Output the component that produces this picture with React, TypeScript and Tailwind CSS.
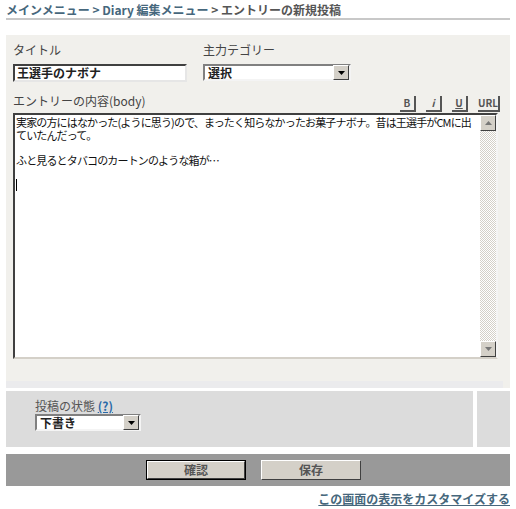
import React from 'react';

const font = { fontFamily: '"MS UI Gothic", "Noto Sans CJK JP", "DejaVu Sans", sans-serif' };

function DropButton() {
  return (
    <div className="w-[16px] h-[15px] bg-[#d4d0c8] border border-t-white border-l-white border-b-[#404040] border-r-[#404040] flex items-center justify-center">
      <svg width="7" height="4" viewBox="0 0 7 4">
        <path d="M0 0h7L3.5 4z" fill="#000" />
      </svg>
    </div>
  );
}

function Select({ label, width }: { label: string; width: string }) {
  return (
    <div className={`${width} h-[17px] bg-white border-2 border-t-[#808080] border-l-[#808080] border-b-[#f4f4f4] border-r-[#f4f4f4] flex items-center justify-between`}>
      <span className="pl-[3px] text-[12px] font-bold text-[#222] leading-none">{label}</span>
      <DropButton />
    </div>
  );
}

function FmtButton({ children, w }: { children: React.ReactNode; w: string }) {
  return (
    <div className={`${w} h-[16px] bg-[#f1f0ec] border-r-2 border-b-2 border-[#555] flex items-center justify-center text-[10px] font-bold text-[#555] leading-none`}>
      {children}
    </div>
  );
}

export default function App() {
  return (
    <div className="w-[516px] h-[509px] bg-white text-[12px] text-[#333]" style={font}>
      <div className="px-[6px] pt-[3px]">
        <div className="h-[17px] border-b-2 border-[#c8c8c8] text-[12px] font-bold leading-[14px] whitespace-nowrap">
          <span className="text-[#46677c]">メインメニュー</span>
          <span className="text-[#46677c]"> &gt; Diary 編集メニュー</span>
          <span className="text-[#555]"> &gt; エントリーの新規投稿</span>
        </div>

        <div className="mt-[15px] bg-[#f1f0ec] pt-[8px] pl-[7px]">
          <div className="flex">
            <div className="w-[190px]">
              <div className="h-[14px] leading-[14px] text-[#444]">タイトル</div>
              <div className="mt-[7px] w-[174px] h-[18px] bg-white border-2 border-t-[#404040] border-l-[#404040] border-b-[#e6e6e6] border-r-[#e6e6e6] flex items-center pl-[2px] text-[12px] font-bold text-[#222] leading-none">
                王選手のナボナ
              </div>
            </div>
            <div>
              <div className="h-[14px] leading-[14px] text-[#444]">主力テゴリー</div>
              <div className="mt-[7px]">
                <Select label="選択" width="w-[148px]" />
              </div>
            </div>
          </div>

          <div className="mt-[12px] flex items-end justify-between pr-[10px]">
            <div className="h-[14px] leading-[14px] text-[#444] mb-[4px]">エントリーの内容(body)</div>
            <div className="flex gap-[10px]">
              <FmtButton w="w-[16px]">B</FmtButton>
              <FmtButton w="w-[16px]"><i>i</i></FmtButton>
              <FmtButton w="w-[16px]"><u>U</u></FmtButton>
              <FmtButton w="w-[22px]">URL</FmtButton>
            </div>
          </div>

          <div className="mt-[1px] w-[485px] h-[246px] bg-white border-2 border-t-[#404040] border-l-[#404040] border-b-[#d4d0c8] border-r-[#f4f4f4] flex">
            <div className="flex-1 min-w-0 overflow-hidden pl-[1px] pt-[1px] text-[11px] tracking-[-0.85px] leading-[12.5px] text-[#111] whitespace-nowrap">
              <div>実家の方にはなかった(ように思う)ので、まったく知らなかったお菓子ナボナ。昔は王選手がCMに出</div>
              <div>ていたんだって。</div>
              <div className="h-[12.5px]"></div>
              <div>ふと見るとタバコのカートンのような箱が…</div>
              <div className="h-[12.5px]"></div>
              <div className="w-[1px] h-[12px] bg-black"></div>
            </div>
            <div className="w-[16px] flex flex-col bg-[repeating-conic-gradient(#d4d0c8_0%_25%,#ffffff_0%_50%)] bg-[length:2px_2px]">
              <div className="w-[16px] h-[16px] bg-[#d4d0c8] border border-t-white border-l-white border-b-[#404040] border-r-[#404040] flex items-center justify-center">
                <svg width="7" height="4" viewBox="0 0 7 4">
                  <path d="M3.5 0L7 4H0z" fill="#777" />
                </svg>
              </div>
              <div className="flex-1"></div>
              <div className="w-[16px] h-[16px] bg-[#d4d0c8] border border-t-white border-l-white border-b-[#404040] border-r-[#404040] flex items-center justify-center">
                <svg width="7" height="4" viewBox="0 0 7 4">
                  <path d="M0 0h7L3.5 4z" fill="#777" />
                </svg>
              </div>
            </div>
          </div>

          <div className="h-[22px]"></div>
          <div className="mr-[7px] -ml-[7px] h-[7px] bg-[#ebebed]"></div>
        </div>

        <div className="mt-[3px] flex gap-[4px] h-[56px]">
          <div className="flex-1 bg-[#dcdcdc] pl-[29px] pt-[8px]">
            <div className="h-[14px] leading-[14px] text-[#555]">
              投稿の状態 <span className="font-bold text-[#2a6aa8] underline">(?)</span>
            </div>
            <div className="mt-[1px]">
              <Select label="下書き" width="w-[106px]" />
            </div>
          </div>
          <div className="w-[33px] bg-[#dcdcdc]"></div>
        </div>

        <div className="mt-[7px] h-[32px] bg-[#999] flex items-center justify-center gap-[15px] pr-[9px]">
          <div className="w-[100px] h-[20px] border border-black">
            <div className="w-full h-full bg-[#d4d0c8] border border-t-white border-l-white border-b-[#404040] border-r-[#404040] flex items-center justify-center text-[12px] font-bold text-[#555]">
              確認
            </div>
          </div>
          <div className="w-[100px] h-[20px] bg-[#d4d0c8] border border-t-white border-l-white border-b-[#404040] border-r-[#404040] flex items-center justify-center text-[12px] font-bold text-[#555]">
            保存
          </div>
        </div>

        <div className="mt-[6px] text-right text-[12px] font-bold text-[#46677c] underline leading-[14px]">
          この画面の表示をカスタマイズする
        </div>
      </div>
    </div>
  );
}
